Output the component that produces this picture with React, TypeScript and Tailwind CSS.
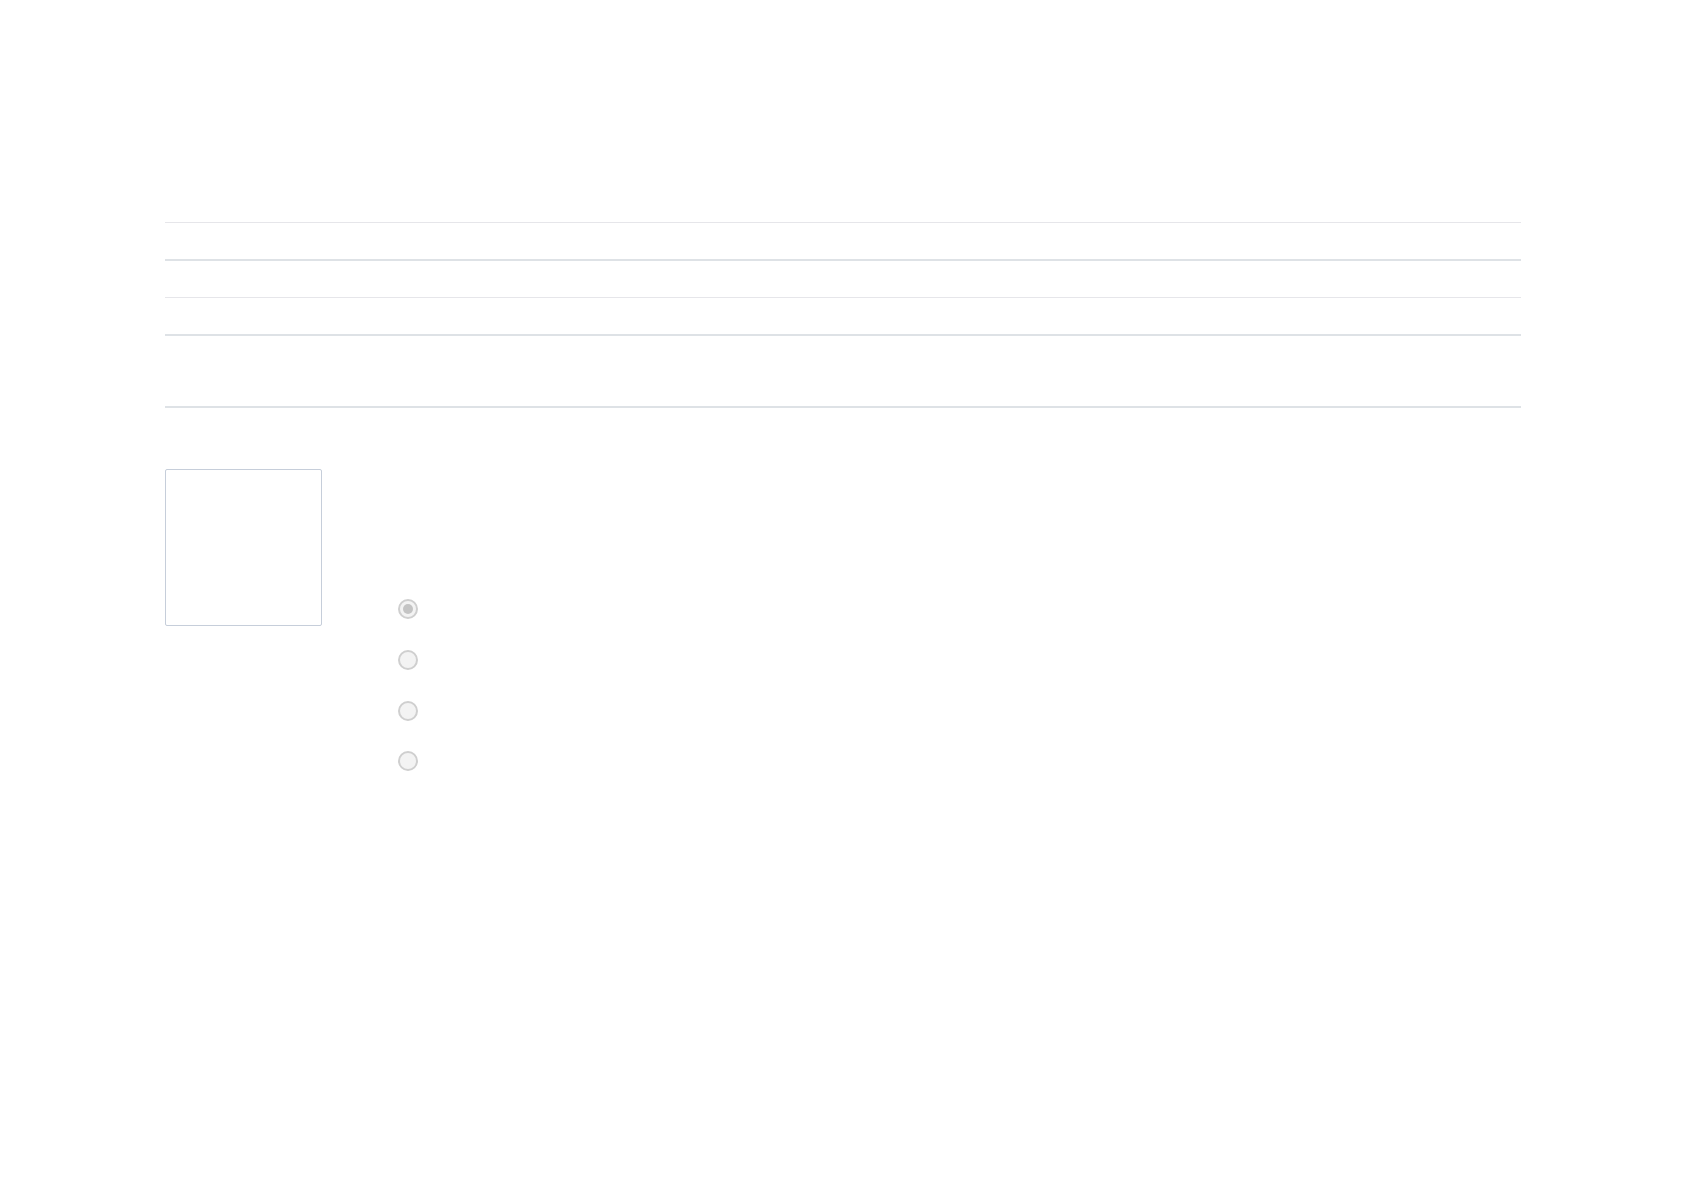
import React from "react";

function Radio({ checked, className }: { checked?: boolean; className?: string }) {
  return (
    <div className={"w-[20px] h-[20px] rounded-full border-2 border-[#cfcfcf] bg-[#f3f3f3] flex items-center justify-center " + (className ?? "")}>
      {checked ? <div className="w-[10px] h-[10px] rounded-full bg-[#c4c4c4]" /> : null}
    </div>
  );
}

export default function App() {
  return (
    <div className="min-h-[1190px] w-full bg-white" style={{ fontFamily: '"Liberation Sans", Arial, sans-serif' }}>
      <div className="ml-[165px] w-[1356px] pt-[222px]">
        <div className="flex flex-col">
          <div className="h-[39px] border-t border-b-2 border-t-[#e6e6ea] border-b-[#dee2e6]" />
          <div className="h-[37px] border-b border-[#e6e6ea]" />
          <div className="h-[38px] border-b-2 border-[#dee2e6]" />
          <div className="h-[72px] border-b-2 border-[#dee2e6]" />
        </div>
        <div className="mt-[61px] flex items-start">
          <div className="w-[157px] h-[157px] border border-[#c6ceda] rounded-[2px]" />
          <div className="ml-[76px] mt-[130px] flex flex-col">
            <Radio checked />
            <Radio className="mt-[31px]" />
            <Radio className="mt-[31px]" />
            <Radio className="mt-[30px]" />
          </div>
        </div>
      </div>
    </div>
  );
}
